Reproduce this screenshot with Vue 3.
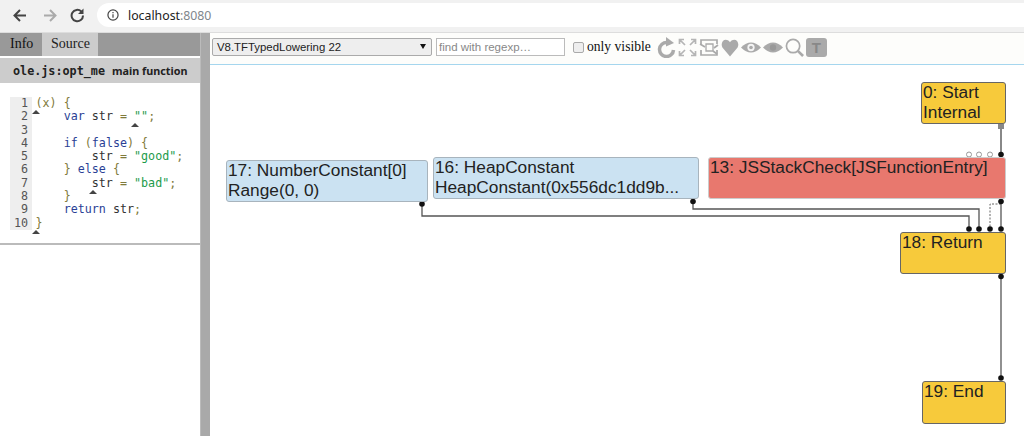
<script setup>
const lines = [
  [['p','(x) {']],
  [['t','    '],['k','var'],['t',' str '],['p','='],['t',' '],['s','""'],['p',';']],
  [],
  [['t','    '],['k','if'],['t',' '],['p','('],['k','false'],['p',') {']],
  [['t','        str '],['p','='],['t',' '],['s','"good"'],['p',';']],
  [['t','    '],['p','}'],['t',' '],['k','else'],['t',' '],['p','{']],
  [['t','        str '],['p','='],['t',' '],['s','"bad"'],['p',';']],
  [['t','    '],['p','}']],
  [['t','    '],['k','return'],['t',' str'],['p',';']],
  [['p','}']],
]
const marks = [
  { x: 36, y: 110 }, { x: 135, y: 123 }, { x: 93, y: 190 }, { x: 36, y: 230 },
]
const nodes = [
  { id: 0, cls: 'yellow', x: 711, y: 17, w: 85, h: 42, text: ['0: Start', 'Internal'] },
  { id: 13, cls: 'red', x: 498, y: 92, w: 298, h: 42, text: ['13: JSStackCheck[JSFunctionEntry]'] },
  { id: 16, cls: 'blue', x: 223, y: 92, w: 266, h: 42, text: ['16: HeapConstant', 'HeapConstant(0x556dc1dd9b...'] },
  { id: 17, cls: 'blue', x: 16, y: 95, w: 202, h: 42, text: ['17: NumberConstant[0]', 'Range(0, 0)'] },
  { id: 18, cls: 'yellow', x: 690, y: 167, w: 106, h: 42, text: ['18: Return'] },
  { id: 19, cls: 'yellow', x: 712, y: 316, w: 84, h: 43, text: ['19: End'] },
]
const dots = [[212,139],[483,136.5],[791,136.5],[791,89.5],[759,164],[769,164],[780,164],[791,164],[791,211.5],[791,313]]
const hollow = [[759,89.5],[769,89.5],[780,89.5]]
</script>

<template>
  <div class="page">
    <header class="chrome">
      <svg class="nav" width="84" height="32" viewBox="0 0 84 32" fill="none" stroke-width="2">
        <path d="M26 15.500H15M20 10l-5.500 5.500L20 21" stroke="#444" />
        <path d="M44 15.500h11M50 10l5.500 5.500L50 21" stroke="#aaa" />
        <path d="M83 15.500a5.700 5.700 0 1 1-1.700-4" stroke="#444" />
        <path d="M83.500 8.500v5.500h-5.500z" fill="#444" />
      </svg>
      <div class="omnibox">
        <svg width="12" height="12" viewBox="0 0 13 13" fill="none" stroke="#444" stroke-width="1.300">
          <circle cx="6.500" cy="6.500" r="5.500" />
          <path d="M6.500 5.700v3.800M6.500 3.200v1.300" />
        </svg>
        <span class="host">localhost<span class="port">:8080</span></span>
      </div>
    </header>
    <main class="work">
      <aside class="left">
        <nav class="tabs">
          <span class="tab">Info</span>
          <span class="tab active">Source</span>
        </nav>
        <div class="title"><span class="file">ole.js:opt_me</span><span class="sub">main function</span></div>
        <div class="code">
          <div class="nums">
            <div v-for="(l, i) in lines" :key="i">{{ i + 1 }}</div>
          </div>
          <pre class="src"><div v-for="(l, i) in lines" :key="i" class="ln"><span v-for="(s, j) in l" :key="j" :class="s[0]">{{ s[1] }}</span></div></pre>
        </div>
        <i v-for="(m, i) in marks" :key="i" class="mark" :style="{ left: m.x - 4 + 'px', top: m.y - 33 + 'px' }"></i>
      </aside>
      <div class="gutter"></div>
      <section class="right">
        <div class="toolbar">
          <div class="select">V8.TFTypedLowering 22<span class="caret"></span></div>
          <div class="search">find with regexp…</div>
          <label class="check"><span class="box"></span>only visible</label>
          <div class="icons">
            <svg width="19" height="22" viewBox="0 0 19 22"><path d="M10 6.500a7 7 0 1 0 6.500 7.500" fill="none" stroke="#aaa" stroke-width="3.500"/><path d="M9 1l8 6-8 3.500z" fill="#aaa"/></svg>
            <svg width="19" height="19" viewBox="0 0 19 19" fill="none" stroke="#b5b5b5" stroke-width="1.700"><path d="M1.500 6V1.500H6M2 2l5 5M13 1.500h4.500V6M17 2l-5 5M1.500 13v4.500H6M2 17l5-5M17.500 13v4.500H13M17 17l-5-5"/></svg>
            <svg width="20" height="19" viewBox="0 0 20 19" fill="none" stroke="#aaa" stroke-width="1.700"><path d="M2 7V2h16v4M2 12v5h16v-5"/><path d="M7 6h7v7H7z" stroke-width="1.300"/><path d="M1 6l5 3M19 7l-4 3M14 13l4 3" /></svg>
            <svg width="18" height="19" viewBox="0 0 19 20" fill="#aaa"><path d="M9.500 19.500L1.500 10C-1.500 4 5 -1.500 9.500 4.500 14 -1.500 20.500 4 17.500 10z"/></svg>
            <svg width="20" height="15" viewBox="0 0 22 16"><path d="M0 8q11-11 22 0q-11 11-22 0z" fill="#aaa"/><circle cx="11" cy="8" r="4" fill="#f4f4f4"/><circle cx="11" cy="8" r="2" fill="#aaa"/></svg>
            <svg width="20" height="15" viewBox="0 0 22 16"><path d="M0 8q11-11 22 0q-11 11-22 0z" fill="#aaa"/><circle cx="11" cy="8" r="3.500" fill="#999"/></svg>
            <svg width="19" height="19" viewBox="0 0 20 20" fill="none" stroke="#aaa"><circle cx="8.500" cy="8.500" r="7" stroke-width="1.800"/><path d="M13.500 13.500l5.500 5.500" stroke-width="2.800"/></svg>
            <span class="t-btn">T</span>
          </div>
        </div>
        <div class="graph">
          <svg class="edges" width="804" height="371" viewBox="0 0 804 371" fill="none">
            <path d="M791 62V89" stroke="#888" stroke-width="2" />
            <path d="M212 139V151H759V164" stroke="#555" stroke-width="1.300" />
            <path d="M483 136V144H769V164" stroke="#555" stroke-width="1.300" />
            <path d="M791 136V164" stroke="#555" stroke-width="1.300" />
            <path d="M791 139H780V164" stroke="#666" stroke-width="1" stroke-dasharray="2 1.500" />
            <path d="M791 211V313" stroke="#555" stroke-width="1.300" />
            <rect x="788" y="59" width="6" height="5" fill="#888" />
            <circle v-for="d in dots" :key="d.join()" :cx="d[0]" :cy="d[1]" r="2.800" fill="#111" />
            <circle v-for="d in hollow" :key="d.join()" :cx="d[0]" :cy="d[1]" r="2.500" fill="#fff" stroke="#999" />
          </svg>
          <div
            v-for="n in nodes"
            :key="n.id"
            class="node"
            :class="n.cls"
            :style="{ left: n.x + 'px', top: n.y + 'px', width: n.w + 'px', height: n.h + 'px' }"
          >
            <div v-for="t in n.text" :key="t">{{ t }}</div>
          </div>
        </div>
      </section>
    </main>
  </div>
</template>

<style>
html, body { margin: 0; background: #fff; overflow: hidden; }
</style>

<style scoped>
.page { width: 1024px; height: 436px; display: flex; flex-direction: column; overflow: hidden; font-family: "Liberation Sans", sans-serif; }
.chrome { height: 32px; background: #f1f1f1; display: flex; align-items: center; border-bottom: 1px solid #ddd; box-sizing: content-box; flex: none; }
.nav { flex: none; margin-right: 13px; }
.omnibox { flex: 1; height: 24px; margin-top: -2px; background: #fff; border-radius: 12px 0 0 12px; display: flex; align-items: center; gap: 9px; padding-left: 10px; }
.host { font-size: 12.300px; font-family: "Noto Sans", sans-serif; color: #222; }
.port { color: #80868b; }
.work { flex: 1; display: flex; min-height: 0; }
.left { width: 200px; position: relative; flex: none; background: #fff; }
.tabs { height: 23px; background: #999; display: flex; font-family: "Liberation Serif", serif; font-size: 14px; }
.tab { width: 41px; box-sizing: border-box; padding: 3px 0 0 10px; color: #111; }
.tab.active { width: 56px; background: #ccc; color: #222; margin-left: 1px; padding: 3px 0 0 9px; }
.title { margin-top: 2px; height: 25px; background: #ccc; display: flex; align-items: center; padding-left: 13px; gap: 7px; font-weight: 700; color: #222; }
.file { font-family: "DejaVu Sans Mono", monospace; font-size: 11.750px; }
.sub { font-family: "Noto Sans", sans-serif; font-size: 10.800px; font-weight: 700; }
.code { display: flex; margin-top: 14px; padding-left: 10px; padding-bottom: 13px; border-bottom: 2px solid #bbb; font: 11.700px/13.300px "DejaVu Sans Mono", monospace; }
.nums { width: 22px; background: #eee; text-align: right; color: #555; box-sizing: border-box; padding-right: 4px; }
.src { margin: 0 0 0 3.500px; font: inherit; color: #333; }
.ln { height: 13.300px; white-space: pre; }
.k { color: #2a3f95; }
.s { color: #1d9b4b; }
.p { color: #7f7a3a; }
.mark { position: absolute; width: 0; height: 0; border-left: 4px solid transparent; border-right: 4px solid transparent; border-bottom: 4px solid #444; }
.gutter { width: 10px; flex: none; background: #a9a9a9; border-left: 1px solid #bbb; box-sizing: border-box; }
.right { flex: 1; display: flex; flex-direction: column; min-width: 0; }
.toolbar { height: 31px; box-sizing: border-box; padding: 0 0 3px 2px; display: flex; align-items: center; flex: none; background: #fdfdfb; }
.select { width: 220px; height: 18px; flex: none; box-sizing: border-box; border: 1px solid #aaa; border-radius: 2px; background: #eee; font-size: 11.400px; line-height: 16px; padding-left: 4px; color: #222; position: relative; }
.caret { position: absolute; right: 5px; top: 5px; width: 0; height: 0; border-left: 3.500px solid transparent; border-right: 3.500px solid transparent; border-top: 5px solid #111; }
.search { margin-left: 4px; width: 129px; height: 18px; flex: none; box-sizing: border-box; border: 1px solid #bbb; font-size: 11.500px; line-height: 16px; padding-left: 2px; color: #888; background: #fff; }
.check { margin-left: 8px; display: flex; align-items: center; gap: 3px; font: 13.600px "Liberation Serif", serif; color: #111; white-space: nowrap; }
.box { width: 9px; height: 9px; border: 1px solid #aaa; border-radius: 2px; background: #eee; }
.icons { display: flex; align-items: center; margin-left: 6px; gap: 2px; }
.t-btn { width: 21px; height: 19px; border-radius: 3px; background: #aaa; color: #888; font: 700 15px/19px "Liberation Sans", sans-serif; text-align: center; }
.graph { position: relative; flex: 1; border-top: 1px solid #a5d6ee; }
.edges { position: absolute; left: 0; top: 0; }
.node { position: absolute; box-sizing: border-box; border-radius: 3px; padding: 0 0 0 1px; font-size: 17.300px; line-height: 19.500px; color: #222; white-space: nowrap; overflow: hidden; }
.yellow { background: #f7ca3b; border: 1px solid #666; }
.red { background: #e8786e; border: 1px solid #ccc; }
.blue { background: #cbe2f2; border: 1px solid #a8b4bd; }
</style>
